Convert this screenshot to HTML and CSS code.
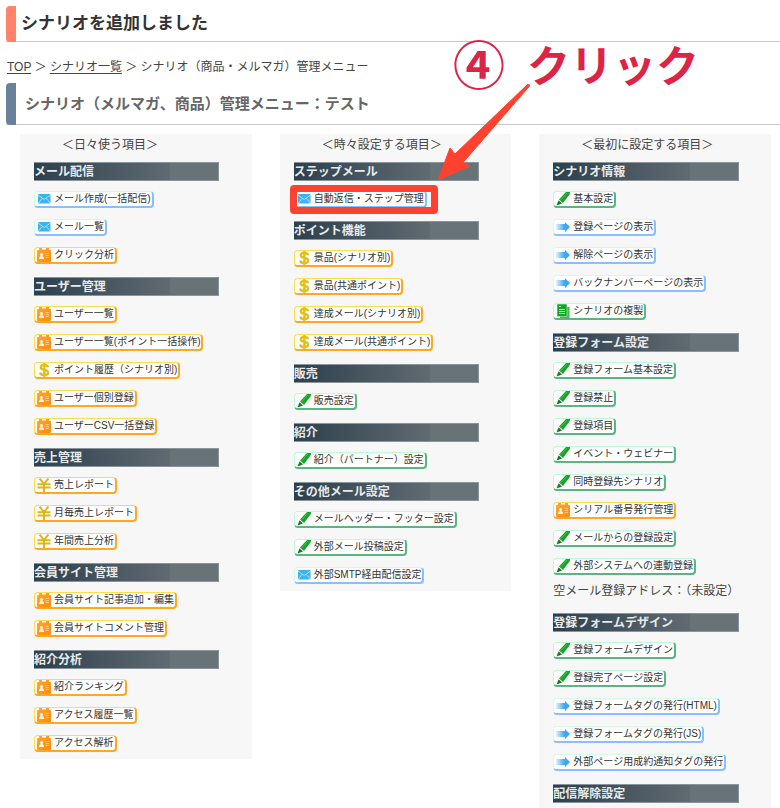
FILE: index.html
```html
<!DOCTYPE html>
<html lang="ja">
<head>
<meta charset="utf-8">
<title>シナリオ管理メニュー</title>
<link rel="stylesheet" href="styles.css">
</head>
<body>
<svg class="sprite" aria-hidden="true">
  <defs>
    <linearGradient id="g-arrow" x1="0" x2="1" y1="0" y2="0"><stop offset="0" stop-color="#3da9f5" stop-opacity=".15"/><stop offset=".6" stop-color="#3da9f5"/></linearGradient>
    <linearGradient id="g-card" x1="0" x2="1" y1="0" y2="1"><stop offset="0" stop-color="#ffa733"/><stop offset="1" stop-color="#ff8a0c"/></linearGradient>
  </defs>
  <symbol id="mail" viewBox="0 0 14 14"><rect x="1" y="2" width="12.500" height="9.500" rx="1" fill="#39b4ee"/><path d="M1 3 7.200 7.500 13.500 3M1.500 11 5 6.500M13 11 9.500 6.500" fill="none" stroke="#c4eaff" stroke-width=".8"/></symbol>
  <symbol id="card" viewBox="0 0 14 14"><path d="M2 0h3v1.500h4V0h3v2h1q1 0 1 1v10q0 1-1 1H1q-1 0-1-1V3q0-1 1-1h1z" fill="url(#g-card)"/><circle cx="4.500" cy="6.500" r="1.600" fill="#fff4df"/><path d="M2 11q0-3 2.500-3T7 11z" fill="#fff4df"/><path d="M8.500 5.500H12M8.500 7.500H12M8.500 9.500H12" stroke="#ffd79a" stroke-width=".8"/></symbol>
  <symbol id="dollar" viewBox="0 0 14 14"><path d="M11 4.200Q10.500 2 7.300 2 3.800 2 3.800 4.300 3.800 6.300 7.400 6.900 11.200 7.500 11.200 9.800 11.200 12 7.300 12 3.500 12 3.200 9.500M7.400 0V14" fill="none" stroke="#e2c01c" stroke-width="2.400"/></symbol>
  <symbol id="yen" viewBox="0 0 14 14"><path d="M2.500.5 7 6 11.500.5M7 6V14M.5 6.200H13.500M.5 9.500H13.500" fill="none" stroke="#d9b81f" stroke-width="2"/></symbol>
  <symbol id="pen" viewBox="0 0 14 14"><path d="M10 0H14L13.800 2 7 11 3 7.500z" fill="#14a527"/><path d="M2.600 8.200 6 11.400.5 13.500z" fill="#147a22"/><path d="M4.500 8 11 1" stroke="#45c552" stroke-width="1"/></symbol>
  <symbol id="go" viewBox="0 0 14 14"><path d="M0 4H9V2L14 7 9 12V10H0z" fill="url(#g-arrow)"/></symbol>
  <symbol id="copy" viewBox="0 0 14 14"><path d="M4 3h9.500v11H4z" fill="#42b84b"/><path d="M1 0h9q1 0 1 1v11.500H1z" fill="#11a526" stroke="#e9fcec" stroke-width=".5"/><path d="M3 2.500H5M3 5.500H9M3 7.500H9M3 9.500H9" stroke="#d2f6d2" stroke-width=".8"/></symbol>
</svg>

<main class="page">
  <h1 class="bar bar-notice">シナリオを追加しました</h1>
  <nav class="crumbs"><a href="#">TOP</a> ＞ <a href="#">シナリオ一覧</a> ＞ シナリオ（商品・メルマガ）管理メニュー</nav>
  <h2 class="bar bar-title">シナリオ（メルマガ、商品）管理メニュー：テスト</h2>

  <div class="columns">
    <section class="panel">
      <p class="panel-title">＜日々使う項目＞</p>
      <h3>メール配信</h3>
      <ul>
        <li><a class="tag blue" href="#"><svg><use href="#mail"/></svg>メール作成(一括配信)</a></li>
        <li><a class="tag blue" href="#"><svg><use href="#mail"/></svg>メール一覧</a></li>
        <li><a class="tag gold" href="#"><svg><use href="#card"/></svg>クリック分析</a></li>
      </ul>
      <h3>ユーザー管理</h3>
      <ul>
        <li><a class="tag gold" href="#"><svg><use href="#card"/></svg>ユーザー一覧</a></li>
        <li><a class="tag gold" href="#"><svg><use href="#card"/></svg>ユーザー一覧(ポイント一括操作)</a></li>
        <li><a class="tag gold" href="#"><svg><use href="#dollar"/></svg>ポイント履歴（シナリオ別)</a></li>
        <li><a class="tag gold" href="#"><svg><use href="#card"/></svg>ユーザー個別登録</a></li>
        <li><a class="tag gold" href="#"><svg><use href="#card"/></svg>ユーザーCSV一括登録</a></li>
      </ul>
      <h3>売上管理</h3>
      <ul>
        <li><a class="tag gold" href="#"><svg><use href="#yen"/></svg>売上レポート</a></li>
        <li><a class="tag gold" href="#"><svg><use href="#yen"/></svg>月毎売上レポート</a></li>
        <li><a class="tag gold" href="#"><svg><use href="#yen"/></svg>年間売上分析</a></li>
      </ul>
      <h3>会員サイト管理</h3>
      <ul>
        <li><a class="tag gold" href="#"><svg><use href="#card"/></svg>会員サイト記事追加・編集</a></li>
        <li><a class="tag gold" href="#"><svg><use href="#card"/></svg>会員サイトコメント管理</a></li>
      </ul>
      <h3>紹介分析</h3>
      <ul>
        <li><a class="tag gold" href="#"><svg><use href="#card"/></svg>紹介ランキング</a></li>
        <li><a class="tag gold" href="#"><svg><use href="#card"/></svg>アクセス履歴一覧</a></li>
        <li><a class="tag gold" href="#"><svg><use href="#card"/></svg>アクセス解析</a></li>
      </ul>
    </section>

    <section class="panel">
      <p class="panel-title">＜時々設定する項目＞</p>
      <h3>ステップメール</h3>
      <ul>
        <li><a class="tag blue marked" href="#"><svg><use href="#mail"/></svg>自動返信・ステップ管理<svg class="pointer" viewBox="0 0 92 96"><path d="M90 0 92 1.500 25 78.500 32 82 0 96 12 64 17 70z" fill="#ff4230" stroke="#ff4230" stroke-linejoin="round"/></svg></a></li>
      </ul>
      <h3>ポイント機能</h3>
      <ul>
        <li><a class="tag gold" href="#"><svg><use href="#dollar"/></svg>景品(シナリオ別)</a></li>
        <li><a class="tag gold" href="#"><svg><use href="#dollar"/></svg>景品(共通ポイント)</a></li>
        <li><a class="tag gold" href="#"><svg><use href="#dollar"/></svg>達成メール(シナリオ別)</a></li>
        <li><a class="tag gold" href="#"><svg><use href="#dollar"/></svg>達成メール(共通ポイント)</a></li>
      </ul>
      <h3>販売</h3>
      <ul>
        <li><a class="tag green" href="#"><svg><use href="#pen"/></svg>販売設定</a></li>
      </ul>
      <h3>紹介</h3>
      <ul>
        <li><a class="tag green" href="#"><svg><use href="#pen"/></svg>紹介（パートナー）設定</a></li>
      </ul>
      <h3>その他メール設定</h3>
      <ul>
        <li><a class="tag green" href="#"><svg><use href="#pen"/></svg>メールヘッダー・フッター設定</a></li>
        <li><a class="tag green" href="#"><svg><use href="#pen"/></svg>外部メール投稿設定</a></li>
        <li><a class="tag blue" href="#"><svg><use href="#mail"/></svg>外部SMTP経由配信設定</a></li>
      </ul>
    </section>

    <section class="panel">
      <p class="panel-title">＜最初に設定する項目＞</p>
      <h3>シナリオ情報</h3>
      <ul>
        <li><a class="tag green" href="#"><svg><use href="#pen"/></svg>基本設定</a></li>
        <li><a class="tag blue" href="#"><svg><use href="#go"/></svg>登録ページの表示</a></li>
        <li><a class="tag blue" href="#"><svg><use href="#go"/></svg>解除ページの表示</a></li>
        <li><a class="tag blue" href="#"><svg><use href="#go"/></svg>バックナンバーページの表示</a></li>
        <li><a class="tag green" href="#"><svg><use href="#copy"/></svg>シナリオの複製</a></li>
      </ul>
      <h3>登録フォーム設定</h3>
      <ul>
        <li><a class="tag green" href="#"><svg><use href="#pen"/></svg>登録フォーム基本設定</a></li>
        <li><a class="tag green" href="#"><svg><use href="#pen"/></svg>登録禁止</a></li>
        <li><a class="tag green" href="#"><svg><use href="#pen"/></svg>登録項目</a></li>
        <li><a class="tag green" href="#"><svg><use href="#pen"/></svg>イベント・ウェビナー</a></li>
        <li><a class="tag green" href="#"><svg><use href="#pen"/></svg>同時登録先シナリオ</a></li>
        <li><a class="tag gold" href="#"><svg><use href="#card"/></svg>シリアル番号発行管理</a></li>
        <li><a class="tag green" href="#"><svg><use href="#pen"/></svg>メールからの登録設定</a></li>
        <li><a class="tag green" href="#"><svg><use href="#pen"/></svg>外部システムへの連動登録</a></li>
      </ul>
      <p class="note">空メール登録アドレス：（未設定）</p>
      <h3>登録フォームデザイン</h3>
      <ul>
        <li><a class="tag green" href="#"><svg><use href="#pen"/></svg>登録フォームデザイン</a></li>
        <li><a class="tag green" href="#"><svg><use href="#pen"/></svg>登録完了ページ設定</a></li>
        <li><a class="tag blue" href="#"><svg><use href="#go"/></svg>登録フォームタグの発行(HTML)</a></li>
        <li><a class="tag blue" href="#"><svg><use href="#go"/></svg>登録フォームタグの発行(JS)</a></li>
        <li><a class="tag blue" href="#"><svg><use href="#go"/></svg>外部ページ用成約通知タグの発行</a></li>
      </ul>
      <h3>配信解除設定</h3>
    </section>
  </div>

  <p class="callout"><span class="step">④</span><span>クリック</span></p>
</main>
</body>
</html>
```
FILE: styles.css
```css
* { box-sizing: border-box; }

body {
  margin: 0;
  background: #fff;
  color: #444;
  font: 12px/18px "Liberation Sans", "Noto Sans CJK JP", sans-serif;
}

h1, h2, h3, p, ul { margin: 0; padding: 0; }
ul { list-style: none; }

.sprite { position: absolute; width: 0; height: 0; }

.page { position: relative; padding: 6px 0 0 6px; }

/* Page headings with a coloured tab on the left */
.bar {
  position: relative;
  border-bottom: 1px solid #c8c8c8;
  color: #333;
  font-size: 17px;
  line-height: 35px;
  padding-left: 15px;
}
.bar::before {
  content: "";
  position: absolute;
  left: 0;
  top: 0;
  bottom: -1px;
  width: 10px;
  border-radius: 4px 0 0 4px;
  background: #ff826b;
}
.bar-title {
  color: #666;
  font-size: 15px;
  line-height: 41px;
  padding-left: 19px;
}
.bar-title::before { background: #6a8299; }

.crumbs { padding: 16px 0 7px 1px; }
.crumbs a { color: inherit; text-underline-offset: 2px; }

.columns {
  display: grid;
  grid-template-columns: repeat(3, 1fr);
  align-items: start;
  gap: 28px;
  padding: 9px 9px 0 14px;
}

.panel { background: #f7f7f7; padding: 0 14px 7px; }
.panel-title { padding: 1px 0 0 28px; line-height: 20px; margin-bottom: 7px; }

.panel h3 {
  width: 91%;
  height: 19px;
  margin: 13px 0 10px;
  border: 1px solid #89959a;
  border-left: 0;
  background: linear-gradient(90deg, #2c404d 0, #616a71 74%, #677377 74%);
  color: #e8eaeb;
  font-size: 12px;
  line-height: 18px;
}
.panel .panel-title + h3 { margin-top: 0; }

.panel ul { display: grid; gap: 11px; justify-items: start; }
.panel li { display: flex; }
.note { margin-top: 7px; white-space: nowrap; }

/* Menu links */
.tag {
  display: flex;
  align-items: center;
  gap: 3px;
  height: 17px;
  padding: 0 1px 0 2px;
  border: 1px solid;
  border-right-width: 2px;
  border-bottom-width: 2px;
  border-radius: 4px;
  background: #fff;
  color: #333;
  font-size: 10px;
  line-height: 16px;
  text-decoration: none;
  white-space: nowrap;
}
.tag svg { flex: none; width: 14px; height: 14px; }
.blue { border-color: #d2fbe8 #87bfff #87bfff #d2fbe8; }
.gold { border-color: #ffdb4d #ffa81f #ffa81f #ffdb4d; }
.green { border-color: #bdfbd8 #58b683 #58b683 #bdfbd8; }

/* Hand-drawn style annotations */
.marked { position: relative; }
.marked::after {
  content: "";
  position: absolute;
  inset: -7px -13px -8px -5px;
  border: 7px solid #ff4230;
  border-radius: 4px;
}
.tag .pointer {
  position: absolute;
  z-index: 1;
  left: 143px;
  bottom: 26px;
  width: 92px;
  height: 96px;
}
.callout {
  position: absolute;
  left: 453px;
  top: 31px;
  display: flex;
  align-items: center;
  gap: 22px;
  color: #dc2446;
  font-family: "Noto Sans CJK JP", sans-serif;
  font-size: 43px;
  font-weight: 700;
  line-height: 64px;
  white-space: nowrap;
}
.step { font-size: 52px; }
```
